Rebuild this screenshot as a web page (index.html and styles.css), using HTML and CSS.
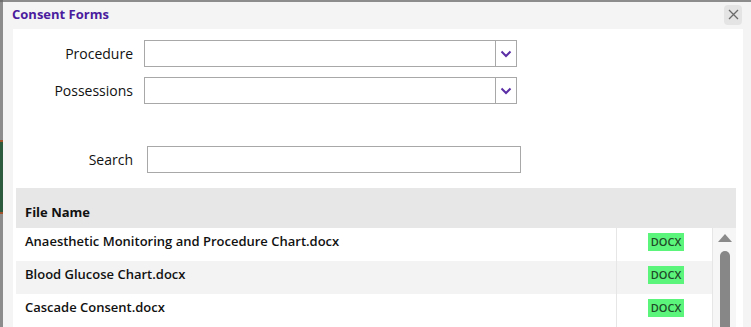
FILE: index.html
```html
<!DOCTYPE html>
<html lang="en">
<head>
  <meta charset="UTF-8">
  <title>Consent Forms</title>
  <meta name="viewport" content="width=device-width, initial-scale=1.0">
  <link rel="stylesheet" href="styles.css">
</head>
<body>

  <div class="backdrop">
    <div class="backdrop-block"></div>
  </div>

  <div class="dialog">
    <div class="dialog-title">
      <span>Consent Forms</span>
      <button class="close-btn" type="button" aria-label="Close">
        <svg width="11" height="11" viewBox="0 0 11 11"><path d="M1 1 L10 10 M10 1 L1 10" stroke="#6b6b6b" stroke-width="1.3" fill="none"/></svg>
      </button>
    </div>

    <div class="dialog-body">
      <div class="field-row">
        <label class="field-label">Procedure</label>
        <div class="combo">
          <div class="combo-input"></div>
          <div class="combo-btn">
            <svg width="12" height="8" viewBox="0 0 12 8"><path d="M1.5 1.5 L6 6 L10.5 1.5" stroke="#5b2ea6" stroke-width="2" fill="none"/></svg>
          </div>
        </div>
      </div>
      <div class="field-row">
        <label class="field-label">Possessions</label>
        <div class="combo">
          <div class="combo-input"></div>
          <div class="combo-btn">
            <svg width="12" height="8" viewBox="0 0 12 8"><path d="M1.5 1.5 L6 6 L10.5 1.5" stroke="#5b2ea6" stroke-width="2" fill="none"/></svg>
          </div>
        </div>
      </div>

      <div class="search-row">
        <label class="field-label">Search</label>
        <input class="search-input" type="text">
      </div>

      <div class="grid">
        <div class="grid-head">File Name</div>
        <div class="grid-body">
          <div class="grid-rows">
            <div class="grid-row">
              <div class="cell-name">Anaesthetic Monitoring and Procedure Chart.docx</div>
              <div class="cell-type"><span class="badge">DOCX</span></div>
            </div>
            <div class="grid-row alt">
              <div class="cell-name">Blood Glucose Chart.docx</div>
              <div class="cell-type"><span class="badge">DOCX</span></div>
            </div>
            <div class="grid-row">
              <div class="cell-name">Cascade Consent.docx</div>
              <div class="cell-type"><span class="badge">DOCX</span></div>
            </div>
          </div>
          <div class="scrollbar">
            <div class="scroll-up"></div>
            <div class="scroll-thumb"></div>
          </div>
        </div>
      </div>
    </div>
  </div>

</body>
</html>
```

FILE: styles.css
```css
body {
  font-family: 'Open Sans', 'Lato', sans-serif;
  margin: 0;
  padding: 0;
  height: 327px;
  overflow: hidden;
  display: flex;
  background-color: #8c8c8c;
}

.backdrop {
  width: 3px;
  padding-top: 138px;
  border-top: 2px solid #6e6e6e;
}

.backdrop-block {
  height: 70px;
  background-color: #2b5a3c;
  border-top: 2px solid #a0522d;
  border-bottom: 2px solid #a0522d;
}

.dialog {
  flex: 1;
  margin-top: 2px;
  background-color: #f4f4f4;
  display: flex;
  flex-direction: column;
}

.dialog-title {
  height: 31px;
  display: flex;
  align-items: center;
  justify-content: space-between;
  padding: 0 6px 0 9px;
  color: #4b1c9e;
  font-weight: bold;
  font-size: 13px;
}

.dialog-title span {
  margin-top: -3px;
}

.close-btn {
  width: 18px;
  height: 20px;
  border: none;
  border-radius: 4px;
  background-color: #e4e4e4;
  padding: 0;
  display: flex;
  align-items: center;
  justify-content: center;
  margin-top: -2px;
  margin-right: 3px;
}

.dialog-body {
  flex: 1;
  background: white;
  margin: 0 8px 0 10px;
  padding: 11px 0 0 3px;
}

.field-row {
  display: flex;
  align-items: center;
  margin-bottom: 10px;
}

.field-label {
  width: 117px;
  text-align: right;
  font-size: 14px;
  color: #111;
}

.combo {
  margin-left: 11px;
  width: 373px;
  height: 27px;
  box-sizing: border-box;
  border: 1px solid #a8a8a8;
  display: flex;
}

.combo-input {
  flex: 1;
}

.combo-btn {
  width: 20px;
  border-left: 1px solid #a8a8a8;
  display: flex;
  align-items: center;
  justify-content: center;
}

.search-row {
  display: flex;
  align-items: center;
  margin-top: 42px;
  margin-bottom: 15px;
}

.search-input {
  margin-left: 14px;
  width: 374px;
  height: 27px;
  box-sizing: border-box;
  border: 1px solid #a8a8a8;
  padding: 0 6px;
}

.grid {
  margin-right: 7px;
}

.grid-head {
  background-color: #e7e7e7;
  height: 40px;
  box-sizing: border-box;
  padding: 15px 0 0 9px;
  font-size: 13px;
  font-weight: bold;
  color: #111;
}

.grid-body {
  display: flex;
}

.grid-rows {
  flex: 1;
}

.grid-row {
  display: flex;
  height: 33px;
  font-size: 13px;
  font-weight: 600;
  color: #111;
}

.grid-row.alt {
  background-color: #f3f3f3;
}

.cell-name {
  flex: 1;
  padding: 4px 0 0 9px;
  border-right: 1px solid #e6e6e6;
}

.cell-type {
  width: 96px;
  border-right: 1px solid #e6e6e6;
  display: flex;
  justify-content: center;
  padding: 5px 0 0 3px;
  box-sizing: border-box;
}

.badge {
  background-color: #5cf57c;
  color: #1f4a28;
  font-size: 11px;
  height: 18px;
  line-height: 18px;
  padding: 0 3px;
}

.scrollbar {
  width: 23px;
  background-color: #f6f6f6;
  display: flex;
  flex-direction: column;
  align-items: center;
  padding-top: 6px;
}

.scroll-up {
  width: 0;
  height: 0;
  border-left: 7px solid transparent;
  border-right: 7px solid transparent;
  border-bottom: 8px solid #8a8a8a;
}

.scroll-thumb {
  margin-top: 9px;
  width: 10px;
  flex: 1;
  background-color: #878787;
  border-radius: 5px 5px 0 0;
}
```
